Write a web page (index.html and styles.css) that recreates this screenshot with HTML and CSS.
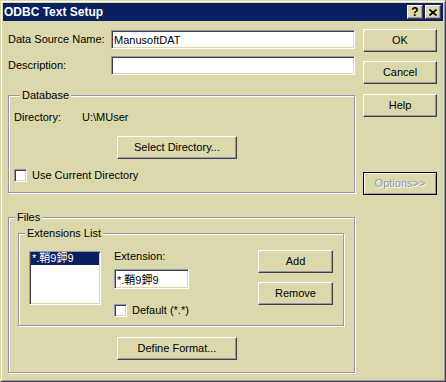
FILE: index.html
```html
<!DOCTYPE html>
<html lang="en">
    <head>
        <meta charset="UTF-8">
        <title>ODBC Text Setup</title>
        <link rel="stylesheet" href="styles.css">
    </head>
    <body>
        <div class="window">
            <div class="titlebar">
                <span class="title">ODBC Text Setup</span>
                <span class="tbtn tbtn_help">?</span>
                <span class="tbtn tbtn_close">
                    <svg width="8" height="7" viewBox="0 0 8 7">
                        <path d="M0.5 0.5 L7.5 6.5 M7.5 0.5 L0.5 6.5" stroke="#000" stroke-width="1.6" fill="none"/>
                    </svg>
                </span>
            </div>

            <div class="dialog">
                <div class="main">
                    <div class="field field_name">
                        <label for="dsn">Data Source Name:</label>
                        <input type="text" class="edit" id="dsn" value="ManusoftDAT">
                    </div>
                    <div class="field field_desc">
                        <label for="desc">Description:</label>
                        <input type="text" class="edit" id="desc" value="">
                    </div>

                    <!-- Database -->
                    <div class="group group_db">
                        <div class="group_title">Database</div>
                        <div class="dir_row">
                            <span class="dir_label">Directory:</span>
                            <span>U:\MUser</span>
                        </div>
                        <button class="btn btn_select">Select Directory...</button>
                        <div class="check_row check_current">
                            <span class="check"></span>
                            <span>Use Current Directory</span>
                        </div>
                    </div>

                    <!-- Files -->
                    <div class="group group_files">
                        <div class="group_title">Files</div>
                        <div class="group group_ext">
                            <div class="group_title">Extensions List</div>
                            <div class="ext_row">
                                <div class="listbox">
                                    <div class="list_item">*.鞘9鉀9</div>
                                </div>
                                <div class="ext_mid">
                                    <div>Extension:</div>
                                    <input type="text" class="edit edit_ext" value="*.鞘9鉀9">
                                    <div class="check_row check_default">
                                        <span class="check"></span>
                                        <span>Default (*.*)</span>
                                    </div>
                                </div>
                                <div class="ext_btns">
                                    <button class="btn btn_small">Add</button>
                                    <button class="btn btn_small btn_remove">Remove</button>
                                </div>
                            </div>
                        </div>
                        <button class="btn btn_format">Define Format...</button>
                    </div>
                </div>

                <div class="side">
                    <button class="btn">OK</button>
                    <button class="btn btn_cancel">Cancel</button>
                    <button class="btn btn_help">Help</button>
                    <button class="btn btn_options" disabled>Options&gt;&gt;</button>
                </div>
            </div>
        </div>
    </body>
</html>
```

FILE: styles.css
```css
* {
    margin: 0;
    padding: 0;
    box-sizing: border-box;
}

body {
    background-color: #dbd9ab;
    font: 11px/13px "Liberation Sans", Arial, "Noto Sans CJK SC", "Noto Sans CJK TC", sans-serif;
    color: #000;
}

.window {
    width: 446px;
    height: 382px;
    background-color: #dbd9ab;
    border: 1px solid;
    border-color: #dbd9ab #40404c #40404c #dbd9ab;
    box-shadow: inset 1px 1px #fff, inset -1px -1px #9896ae;
    padding: 2px;
}

.titlebar {
    height: 18px;
    background-color: #0a2060;
    display: flex;
    align-items: center;
    padding: 0 2px 0 1px;
}

.title {
    flex: 1;
    color: #fff;
    font-weight: bold;
    font-size: 12px;
}

.tbtn {
    width: 16px;
    height: 14px;
    background-color: #dbd9ab;
    border: 1px solid;
    border-color: #fff #40404c #40404c #fff;
    box-shadow: inset -1px -1px #9896ae;
    display: flex;
    align-items: center;
    justify-content: center;
    font-weight: bold;
    font-size: 12px;
}

.tbtn_close {
    margin-left: 2px;
}

.dialog {
    display: flex;
    gap: 8px;
    padding-left: 5px;
}

.main {
    width: 347px;
}

.side {
    width: 74px;
    padding-top: 8px;
    display: flex;
    flex-direction: column;
}

/* rows with an edit box */
.field {
    display: flex;
    align-items: center;
}

.field label {
    width: 103px;
}

.field_name {
    margin-top: 9px;
}

.field_desc {
    margin-top: 7px;
}

.edit {
    width: 244px;
    height: 19px;
    background-color: #fff;
    border: 1px solid;
    border-color: #9896ae #fff #fff #9896ae;
    box-shadow: inset 1px 1px #40404c, inset -1px -1px #dbd9ab;
    padding: 0 2px;
    font: inherit;
    color: #000;
    outline: none;
}

/* etched group boxes */
.group {
    border: 1px solid #9896ae;
    box-shadow: inset 1px 1px #fff, 1px 1px #fff;
}

.group_title {
    width: fit-content;
    margin: -7px 0 0 6px;
    padding: 0 2px;
    background-color: #dbd9ab;
}

.group_db {
    margin-top: 20px;
    padding: 0 0 10px 5px;
}

.dir_row {
    margin-top: 9px;
    display: flex;
}

.dir_label {
    width: 68px;
}

.btn {
    display: block;
    width: 74px;
    height: 23px;
    background-color: #dbd9ab;
    border: 1px solid;
    border-color: #fff #40404c #40404c #fff;
    box-shadow: inset -1px -1px #9896ae;
    font: inherit;
    color: #000;
    text-align: center;
}

.btn_select {
    width: 120px;
    margin: 12px 0 0 103px;
}

.check_row {
    display: flex;
    align-items: center;
    gap: 5px;
}

.check {
    width: 13px;
    height: 13px;
    background-color: #fff;
    border: 1px solid;
    border-color: #9896ae #fff #fff #9896ae;
    box-shadow: inset 1px 1px #40404c, inset -1px -1px #dbd9ab;
}

.check_current {
    margin-top: 10px;
}

.group_files {
    margin-top: 24px;
    padding-bottom: 12px;
}

.group_ext {
    width: 326px;
    margin: 9px 0 0 9px;
}

.ext_row {
    display: flex;
    padding: 10px 0 8px 10px;
}

.listbox {
    width: 72px;
    height: 54px;
    margin-top: 1px;
    background-color: #fff;
    border: 1px solid;
    border-color: #9896ae #fff #fff #9896ae;
    box-shadow: inset 1px 1px #40404c, inset -1px -1px #dbd9ab;
    padding: 0 1px;
}

.list_item {
    height: 13px;
    background-color: #0a2060;
    color: #fff;
    padding-left: 1px;
    line-height: 13px;
}

.ext_mid {
    width: 75px;
    margin-left: 13px;
}

.edit_ext {
    width: 75px;
    height: 20px;
    margin-top: 6px;
    display: block;
}

.check_default {
    margin-top: 15px;
    white-space: nowrap;
}

.ext_btns {
    margin-left: 69px;
}

.btn_small {
    width: 75px;
}

.btn_remove {
    margin-top: 9px;
}

.btn_format {
    width: 120px;
    margin: 11px 0 0 108px;
}

.btn_cancel {
    margin-top: 9px;
}

.btn_help {
    margin-top: 10px;
}

.btn_options {
    margin-top: 55px;
    border-color: #000;
    box-shadow: inset 1px 1px #fff, inset -1px -1px #9896ae;
    color: #9896ae;
    text-shadow: 1px 1px #fff;
}
```
